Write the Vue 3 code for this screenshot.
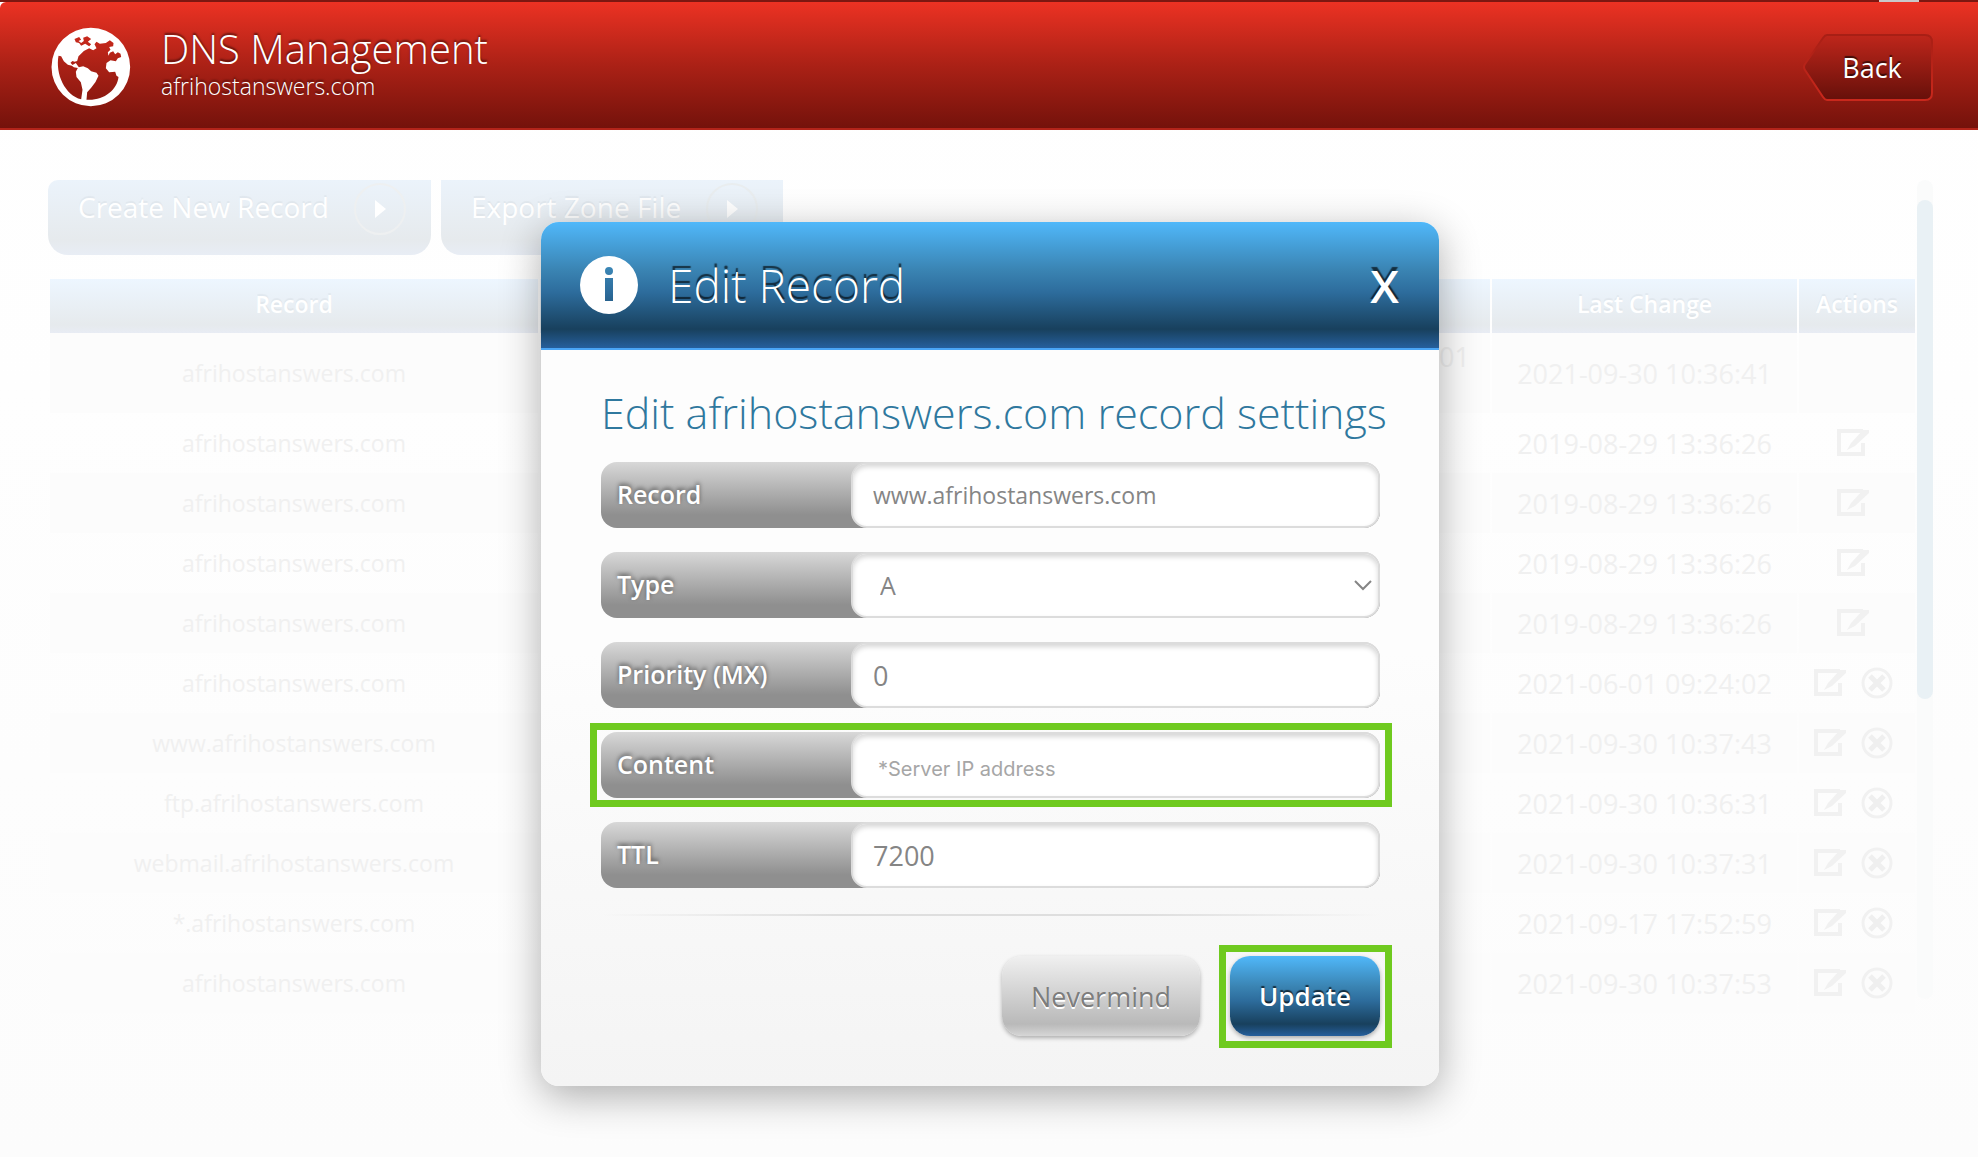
<script setup>
import { reactive, ref } from "vue";

const domain = "afrihostanswers.com";
const showModal = ref(true);

const form = reactive({
  record: "www.afrihostanswers.com",
  type: "A",
  priority: "0",
  content: "",
  ttl: "7200",
});

const records = [
  { name: domain, content: "2021093001", changed: "2021-09-30 10:36:41" },
  { name: domain, changed: "2019-08-29 13:36:26", edit: true },
  { name: domain, changed: "2019-08-29 13:36:26", edit: true },
  { name: domain, changed: "2019-08-29 13:36:26", edit: true },
  { name: domain, changed: "2019-08-29 13:36:26", edit: true },
  { name: domain, changed: "2021-06-01 09:24:02", edit: true, remove: true },
  { name: "www." + domain, changed: "2021-09-30 10:37:43", edit: true, remove: true },
  { name: "ftp." + domain, changed: "2021-09-30 10:36:31", edit: true, remove: true },
  { name: "webmail." + domain, changed: "2021-09-30 10:37:31", edit: true, remove: true },
  { name: "*." + domain, changed: "2021-09-17 17:52:59", edit: true, remove: true },
  { name: domain, changed: "2021-09-30 10:37:53", edit: true, remove: true },
];

function closeModal() {
  showModal.value = false;
}
</script>

<template>
  <div class="page">
    <div class="strip"></div>
    <header class="header">
      <svg class="globe" viewBox="15 18 237 240" aria-hidden="true">
        <path
          fill="#fff"
          fill-rule="evenodd"
          d="M133 20a118 118 0 1 1 0 236a118 118 0 1 1 0-236z
          M36 104C26 160 56 222 104 235L108 206L103 184L90 168L88 152L94 141L82 139L76 134L64 131L52 121L44 106z
          M97 139L110 136L124 142L134 151L150 155L156 164L147 183L134 200L122 214L120 236C170 240 212 208 216 168L210 164L206 152L188 154L178 142L180 126L192 118L208 121L214 112L224 108L222 98L214 94L206 100L200 91L190 95L186 104L184 94L192 86L188 78L200 76L201 66L190 58L178 66L160 68L150 62L144 70L150 82L140 88L128 82L112 90L96 106L92 120L84 122L78 120L72 125L78 132L88 126z
          M84 54L98 48L104 56L96 60L104 66L112 60L110 50L122 46L134 54L124 62L134 70L128 76L116 68L104 74L98 66L88 64z"
        />
      </svg>
      <div class="titles">
        <h1>DNS Management</h1>
        <p>{{ domain }}</p>
      </div>
      <button class="back" type="button">
        <svg viewBox="0 0 130 67" aria-hidden="true">
          <defs>
            <linearGradient id="back-fill" x1="0" y1="0" x2="0" y2="1">
              <stop offset="0" stop-color="#bf261b" />
              <stop offset="1" stop-color="#66100a" />
            </linearGradient>
            <linearGradient id="back-line" x1="0" y1="0" x2="0" y2="1">
              <stop offset="0" stop-color="#a81f15" />
              <stop offset="1" stop-color="#c9281c" />
            </linearGradient>
          </defs>
          <path
            d="M24 1H122Q129 1 129 8V59Q129 66 122 66H24Q22 66 20 63L2 36Q0 33 2 30L20 4Q22 1 24 1z"
            fill="url(#back-fill)"
            stroke="url(#back-line)"
            stroke-width="2"
          />
        </svg>
        <span>Back</span>
      </button>
    </header>

    <main class="content">
      <div class="zone">
        <div class="toolbar">
          <button class="tool create" type="button">
            Create New Record
            <svg viewBox="0 0 54 54" aria-hidden="true">
              <circle cx="27" cy="27" r="25" fill="none" stroke="#eef0f1" stroke-width="2" />
              <path d="M22 18L33 27L22 36z" fill="#fff" />
            </svg>
          </button>
          <button class="tool" type="button">
            Export Zone File
            <svg viewBox="0 0 54 54" aria-hidden="true">
              <circle cx="27" cy="27" r="25" fill="none" stroke="#e9edef" stroke-width="2" />
              <path d="M22 18L33 27L22 36z" fill="#fff" />
            </svg>
          </button>
        </div>
        <table class="records">
          <thead>
            <tr>
              <th class="col-record">Record</th>
              <th class="col-content"></th>
              <th class="col-change">Last Change</th>
              <th class="col-actions">Actions</th>
            </tr>
          </thead>
          <tbody>
            <tr v-for="(row, index) in records" :key="index">
              <td>{{ row.name }}</td>
              <td class="value">{{ row.content }}</td>
              <td class="date">{{ row.changed }}</td>
              <td>
                <div class="actions">
                  <button v-if="row.edit" type="button" aria-label="Edit record">
                    <svg viewBox="0 0 32 28" aria-hidden="true">
                      <path d="M26 2H2V25H26V14" fill="none" stroke="#f1f1f1" stroke-width="4" />
                      <path d="M10 21L14 14L26 1H32V4L18 17z" fill="#f1f1f1" />
                    </svg>
                  </button>
                  <button v-if="row.remove" type="button" aria-label="Delete record">
                    <svg viewBox="0 0 32 32" aria-hidden="true">
                      <circle cx="16" cy="16" r="14" fill="none" stroke="#f1f1f1" stroke-width="3" />
                      <path d="M9 9L23 23M23 9L9 23" stroke="#efefef" stroke-width="5" />
                    </svg>
                  </button>
                </div>
              </td>
            </tr>
          </tbody>
        </table>
      </div>
      <div class="scrollbar"><div class="thumb"></div></div>
    </main>

    <div v-if="showModal" class="overlay">
      <section class="modal" role="dialog" aria-labelledby="modal-title">
        <div class="modal-header">
          <svg class="info" viewBox="0 0 58 58" aria-hidden="true">
            <path
              fill="#fff"
              fill-rule="evenodd"
              d="M29 0a29 29 0 1 1 0 58a29 29 0 1 1 0-58z M29 11a4 4 0 1 0 0 8a4 4 0 1 0 0-8z M25 22V45H33V22z"
            />
          </svg>
          <h2 id="modal-title">Edit Record</h2>
          <button class="close" type="button" @click="closeModal">X</button>
        </div>
        <form class="modal-body" @submit.prevent="closeModal">
          <h3>Edit {{ domain }} record settings</h3>
          <div class="field">
            <label for="record">Record</label>
            <input id="record" class="host" type="text" v-model="form.record" />
          </div>
          <div class="field">
            <label for="type">Type</label>
            <select id="type" v-model="form.type">
              <option value="A">A</option>
            </select>
            <svg class="chevron" viewBox="0 0 18 11" aria-hidden="true">
              <path d="M1 1L9 9L17 1" fill="none" stroke="#858585" stroke-width="2" />
            </svg>
          </div>
          <div class="field">
            <label for="priority">Priority (MX)</label>
            <input id="priority" type="text" v-model="form.priority" />
          </div>
          <div class="field marked">
            <label for="content">Content</label>
            <input id="content" type="text" placeholder="*Server IP address" v-model="form.content" />
          </div>
          <div class="field">
            <label for="ttl">TTL</label>
            <input id="ttl" type="text" v-model="form.ttl" />
          </div>
          <div class="divider"></div>
          <div class="buttons">
            <button class="nevermind" type="button" @click="closeModal">Nevermind</button>
            <div class="marked">
              <button class="update" type="submit">Update</button>
            </div>
          </div>
        </form>
      </section>
    </div>
  </div>
</template>

<style>
body {
  background: #fdfdfd;
}
</style>

<style scoped>
.page,
.page * {
  box-sizing: border-box;
}
.page {
  position: relative;
  min-height: 100vh;
  background: linear-gradient(#ffffff, #fcfcfc);
  font-family: "Open Sans", "Noto Sans", sans-serif;
}
h1,
h2,
h3,
p {
  margin: 0;
}
button {
  border: 0;
  padding: 0;
  background: none;
  font-family: inherit;
  cursor: pointer;
}
.strip {
  height: 2px;
  background: linear-gradient(90deg, transparent 95%, #c9c9c9 95%, #c9c9c9 97%, transparent 97%) #7c1711;
}

/* header */
.header {
  display: flex;
  align-items: center;
  height: 128px;
  padding: 4px 45px 0 51px;
  border-bottom: 2px solid #b3241a;
  border-top-left-radius: 6px;
  background: linear-gradient(#ec3223, #ab2116 50%, #74120b);
  color: #fff;
}
.globe {
  width: 80px;
  height: 80px;
}
.titles {
  flex: 1;
  margin-left: 30px;
  padding-bottom: 8px;
  font-weight: 300;
  text-shadow: 0 -2px 2px rgba(0, 0, 0, 0.5);
}
.titles h1 {
  font-size: 40px;
  font-weight: 300;
  line-height: 46px;
}
.titles p {
  font-size: 23px;
  line-height: 28px;
}
.back {
  position: relative;
  width: 130px;
  height: 67px;
  padding-left: 8px;
  color: #fff;
  font-size: 27px;
}
.back svg {
  position: absolute;
  inset: 0;
}
.back span {
  position: relative;
  text-shadow: 0 -2px 1px rgba(0, 0, 0, 0.6);
}

/* faded zone list */
.content {
  display: flex;
  padding: 50px 45px 0 48px;
}
.zone {
  flex: 1;
}
.toolbar {
  display: flex;
  gap: 10px;
}
.tool {
  display: flex;
  align-items: flex-start;
  gap: 24px;
  height: 75px;
  padding: 2px 24px 0 30px;
  border-radius: 0 0 20px 20px;
  background: linear-gradient(#ebf3fb, #e6eaed 80%, #e8edf5);
  color: #fff;
  font-size: 28px;
  line-height: 50px;
  text-shadow: 0 -2px 1px rgba(0, 0, 0, 0.04);
}
.create {
  border-top-left-radius: 10px;
}
.tool svg {
  width: 54px;
  height: 54px;
}
.records {
  width: 100%;
  margin-top: 24px;
  table-layout: fixed;
  border-collapse: separate;
  border-spacing: 2px 0;
  color: #f0f0f0;
  font-size: 23px;
  text-align: center;
}
.records th {
  height: 54px;
  padding: 0 0 4px;
  background: linear-gradient(#edf6ff, #e6eaed 85%, #e8ecf4);
  color: #fff;
  font-size: 23px;
  font-weight: 600;
  text-shadow: 0 -2px 1px rgba(0, 0, 0, 0.04);
}
.records td {
  height: 60px;
  padding: 0;
}
.records tr:first-child td {
  height: 80px;
}
.records tbody tr:nth-child(odd) td {
  background: #fcfcfc;
}
.records .value {
  padding: 6px 20px 0;
  font-size: 27px;
  line-height: 36px;
  text-align: right;
  vertical-align: top;
}
.records .date {
  font-size: 27px;
}
.col-record {
  width: 488px;
}
.col-change {
  width: 305px;
}
.col-actions {
  width: 116px;
}
.actions {
  display: flex;
  align-items: center;
  justify-content: center;
  gap: 15px;
  padding-right: 8px;
}
.actions svg {
  display: block;
  width: 32px;
}
.scrollbar {
  width: 16px;
  height: 819px;
  padding-top: 20px;
  border-radius: 8px;
  background: #fafbfb;
}
.thumb {
  height: 499px;
  border-radius: 8px;
  background: #e9f1f5;
}

/* modal */
.overlay {
  position: absolute;
  inset: 0;
  display: flex;
  justify-content: center;
  align-items: flex-start;
  padding: 222px 20px 0 22px;
}
.modal {
  width: 100%;
  max-width: 898px;
  border-radius: 18px;
  background: linear-gradient(#fdfdfd 50%, #f4f4f4);
  box-shadow: 0 10px 40px rgba(0, 0, 0, 0.32);
}
.modal-header {
  display: flex;
  align-items: center;
  height: 128px;
  padding: 0 40px 0 39px;
  border-bottom: 2px solid #4aa5f5;
  border-radius: 18px 18px 0 0;
  background: linear-gradient(#50b8fa, #3a84b3 38%, #2d6c9c 56%, #18405d 85%, #265f9c);
  color: #fff;
}
.info {
  width: 58px;
  height: 58px;
}
.modal-header h2 {
  flex: 1;
  margin-left: 30px;
  font-size: 46px;
  font-weight: 300;
  text-shadow: 0 -4px 1px rgba(0, 0, 0, 0.65);
}
.close {
  color: #fff;
  font-size: 46px;
  font-weight: 600;
  text-shadow: 0 -4px 1px rgba(0, 0, 0, 0.65);
}
.modal-body {
  padding: 32px 59px 50px 60px;
}
.modal-body h3 {
  margin-bottom: 18px;
  color: #2f789e;
  font-size: 43px;
  font-weight: 300;
  line-height: 62px;
  white-space: nowrap;
}
.field {
  position: relative;
  display: flex;
  height: 66px;
  margin-bottom: 24px;
  border-radius: 16px;
  background: linear-gradient(#d8d8d8, #8f8f8f 80%);
}
.field label {
  width: 250px;
  padding-left: 16px;
  color: #fff;
  font-size: 25px;
  font-weight: 600;
  line-height: 64px;
  text-shadow: 0 -2px 4px rgba(0, 0, 0, 0.5);
}
.field input,
.field select {
  flex: 1;
  min-width: 0;
  padding: 0 20px;
  border: 2px solid #dcdcdc;
  border-radius: 16px;
  outline: 0;
  appearance: none;
  background: #fff;
  box-shadow: inset 0 3px 5px rgba(0, 0, 0, 0.16);
  color: #858585;
  font-family: inherit;
  font-size: 27px;
}
.field .host {
  font-size: 23px;
}
.field select {
  padding-left: 27px;
  font-size: 25px;
}
.field input::placeholder {
  padding-left: 5px;
  color: #a6a6a6;
  font-family: Inter, sans-serif;
  font-size: 20px;
}
.chevron {
  position: absolute;
  top: 28px;
  right: 8px;
  width: 18px;
  pointer-events: none;
}
.marked {
  position: relative;
}
.marked::after {
  content: "";
  position: absolute;
  inset: -9px -12px -9px -11px;
  border: 7px solid #6fca1f;
  pointer-events: none;
}
.divider {
  height: 2px;
  margin-top: 26px;
  background: linear-gradient(90deg, transparent, #dedede 30%, #dedede 70%, transparent);
}
.buttons {
  display: flex;
  justify-content: flex-end;
  gap: 30px;
  margin-top: 40px;
}
.buttons .marked::after {
  inset: -11px -12px -12px -11px;
}
.nevermind,
.update {
  height: 80px;
  border-radius: 20px;
  font-size: 27px;
  box-shadow: 0 2px 4px rgba(0, 0, 0, 0.3);
}
.nevermind {
  width: 198px;
  background: linear-gradient(#f0f0f0, #b9b9b9 85%, #d6d6d6);
  color: #7d7d7d;
  text-shadow: 0 2px 0 #fff;
}
.update {
  width: 150px;
  background: linear-gradient(#50b8fa, #3a84b3 38%, #2d6c9c 56%, #18405d 85%, #265f9c);
  color: #fff;
  font-size: 26px;
  font-weight: 600;
  text-shadow: 0 -2px 1px rgba(0, 0, 0, 0.65);
}
</style>
